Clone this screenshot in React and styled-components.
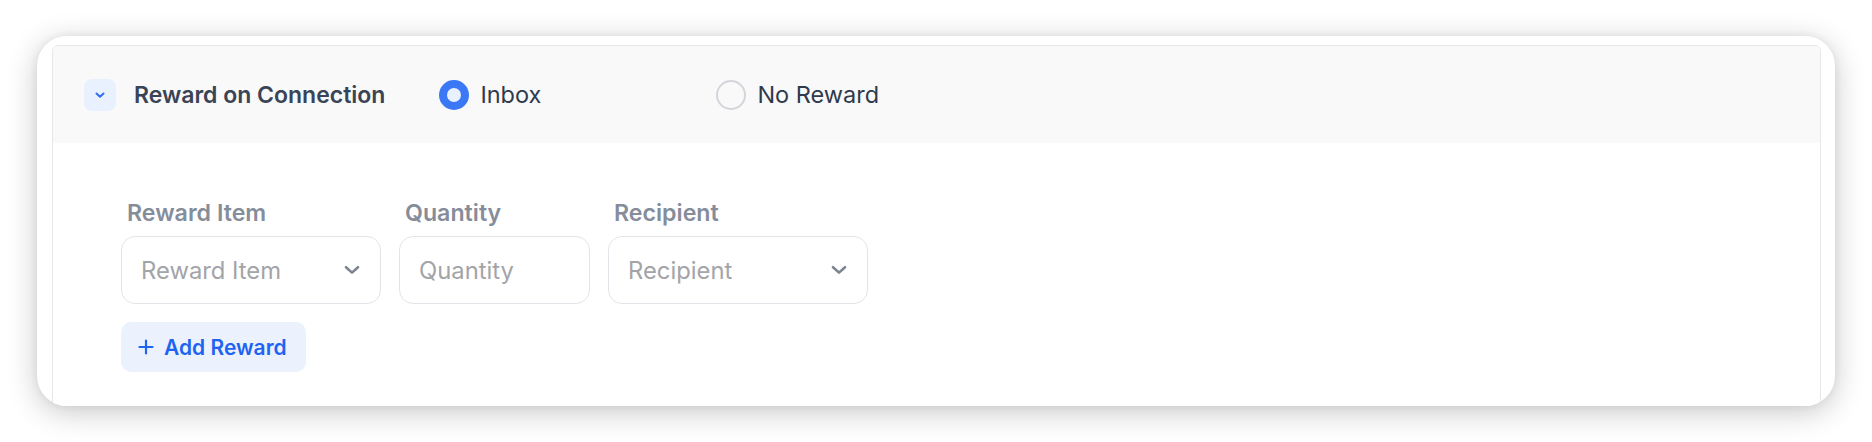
import React from "react";
import styled, { createGlobalStyle } from "styled-components";

const Global = createGlobalStyle`
  html, body { margin: 0; padding: 0; background: #ffffff; }
  body { font-family: Inter, "Noto Sans", sans-serif; -webkit-font-smoothing: antialiased; }
  * { box-sizing: border-box; }
`;

const Page = styled.div`
  padding: 36px 37px;
  width: 1872px;
  height: 442px;
  overflow: hidden;
`;

const Card = styled.div`
  height: 370px;
  background: #ffffff;
  border-radius: 30px;
  box-shadow: 0 6px 30px rgba(0, 0, 0, 0.22), 0 0 8px rgba(0, 0, 0, 0.06);
  padding: 9px 14px 0 15px;
  overflow: hidden;
`;

const Panel = styled.section`
  height: 420px;
  border: 1px solid #e6e7eb;
  border-radius: 6px 6px 0 0;
  background: #ffffff;
  overflow: hidden;
`;

const Header = styled.div`
  height: 97px;
  background: #f9f9fa;
  display: flex;
  align-items: center;
  padding-left: 31px;
`;

const ToggleButton = styled.button`
  width: 32px;
  height: 32px;
  border: none;
  border-radius: 8px;
  background: #eaf1fe;
  display: flex;
  align-items: center;
  justify-content: center;
  padding: 0;
  margin-right: 18px;
  color: #2f6df2;
  cursor: pointer;
`;

const Title = styled.h3`
  margin: 0;
  font-size: 23px;
  font-weight: 600;
  color: #394456;
`;

const RadioGroup = styled.div`
  display: flex;
  align-items: center;
  margin-left: 54px;
`;

const RadioOption = styled.label`
  display: flex;
  align-items: center;
  gap: 11px;
  width: ${(p) => p.$width}px;
  font-size: 23.5px;
  color: #2f3a4c;
  cursor: pointer;
`;

const RadioDot = styled.span`
  width: 30px;
  height: 30px;
  border-radius: 50%;
  flex: none;
  border: ${(p) => (p.$checked ? "8px solid #3a78f5" : "2.5px solid #d3d5db")};
  background: ${(p) => (p.$checked ? "#e9f0fe" : "transparent")};
`;

const Body = styled.div`
  padding: 56px 68px 0;
`;

const FieldRow = styled.div`
  display: flex;
  gap: 18px;
`;

const Field = styled.div`
  display: flex;
  flex-direction: column;
  gap: 9px;
`;

const Label = styled.div`
  font-size: 23.2px;
  line-height: 28px;
  font-weight: 600;
  color: #868d9a;
  padding-left: 6px;
`;

const InputBox = styled.div`
  width: ${(p) => p.$width}px;
  height: 68px;
  border: 1.5px solid #e3e4e9;
  border-radius: 14px;
  background: #fff;
  display: flex;
  align-items: center;
  justify-content: space-between;
  padding: 0 20px 0 19px;
`;

const Placeholder = styled.span`
  font-size: 23.8px;
  color: #a3a4a8;
`;

const AddButton = styled.button`
  margin-top: 18px;
  height: 50px;
  width: 185px;
  border: none;
  border-radius: 10px;
  background: #ebf2fe;
  color: #1f64f0;
  font-family: Inter, "Noto Sans", sans-serif;
  font-size: 21px;
  font-weight: 600;
  display: flex;
  align-items: center;
  gap: 10px;
  padding: 0 0 0 17px;
  cursor: pointer;
`;

const SmallChevron = () => (
  <svg width="12" height="8" viewBox="0 0 12 8" fill="none">
    <path d="M2.5 2.5L6 5.8L9.5 2.5" stroke="currentColor" strokeWidth="2" strokeLinecap="round" strokeLinejoin="round" />
  </svg>
);

const SelectChevron = () => (
  <svg width="16" height="10" viewBox="0 0 16 10" fill="none">
    <path d="M2 2.2L8 7.6L14 2.2" stroke="#7d8491" strokeWidth="2.6" strokeLinecap="round" strokeLinejoin="round" />
  </svg>
);

const PlusIcon = () => (
  <svg width="16" height="16" viewBox="0 0 16 16" fill="none">
    <path d="M8 1.5V14.5M1.5 8H14.5" stroke="currentColor" strokeWidth="2.2" strokeLinecap="round" />
  </svg>
);

const fields = [
  { label: "Reward Item", width: 260, select: true },
  { label: "Quantity", width: 191, select: false },
  { label: "Recipient", width: 260, select: true },
];

export default function App() {
  return (
    <>
      <Global />
      <Page>
        <Card>
          <Panel>
            <Header>
              <ToggleButton aria-label="Collapse">
                <SmallChevron />
              </ToggleButton>
              <Title>Reward on Connection</Title>
              <RadioGroup>
                <RadioOption $width={277}>
                  <RadioDot $checked />
                  Inbox
                </RadioOption>
                <RadioOption $width={200}>
                  <RadioDot />
                  No Reward
                </RadioOption>
              </RadioGroup>
            </Header>
            <Body>
              <FieldRow>
                {fields.map((f) => (
                  <Field key={f.label}>
                    <Label>{f.label}</Label>
                    <InputBox $width={f.width}>
                      <Placeholder>{f.label}</Placeholder>
                      {f.select && <SelectChevron />}
                    </InputBox>
                  </Field>
                ))}
              </FieldRow>
              <AddButton>
                <PlusIcon />
                Add Reward
              </AddButton>
            </Body>
          </Panel>
        </Card>
      </Page>
    </>
  );
}
